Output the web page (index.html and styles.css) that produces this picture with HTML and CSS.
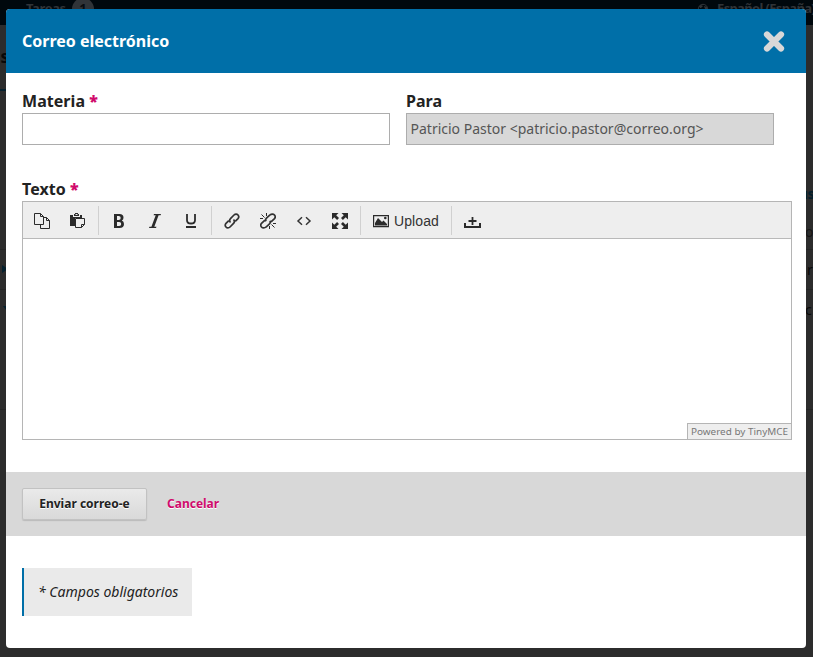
FILE: index.html
```html
<!DOCTYPE html>
<html lang="es">
<head>
<meta charset="utf-8">
<title>Correo electrónico</title>
<link rel="stylesheet" href="styles.css">
</head>
<body>
<div class="backdrop" aria-hidden="true">
  <div class="nav"></div>
  <span class="bg tasks">Tareas</span><span class="bg count">1</span>
  <svg class="bg globe" viewBox="0 0 12 12"><circle cx="6" cy="6" r="4.700" fill="none" stroke="#303438" stroke-width="1"/><path d="M2 3l2-1 2 1-2 2H3zM7 3l3 1v3L8 6z" fill="#303438"/></svg>
  <span class="bg lang">Español (España)</span>
  <span class="bg title">Us</span><span class="bg tabline"></span>
  <span class="bg row r1"></span><span class="bg row r2"></span><span class="bg row r3"></span>
  <span class="bg arrow"></span><span class="bg arrow down"></span>
  <span class="bg action">us</span><span class="bg word w1">o</span><span class="bg word w2">r</span><span class="bg word w3">c</span>
</div>
<main class="modal">
  <header class="head">
    <h1>Correo electrónico</h1>
    <button class="close" aria-label="Cerrar"><svg width="22" height="22" viewBox="0 0 22 22"><path d="M4 4.500L18 18.500M18 4.500L4 18.500" stroke="#d8d8d8" stroke-width="6.200" stroke-linecap="round"/></svg></button>
  </header>
  <form>
    <div class="fields">
      <div class="field"><label for="subject">Materia <b>*</b></label><input id="subject"></div>
      <div class="field"><label for="to">Para</label><input id="to" value="Patricio Pastor &lt;patricio.pastor@correo.org&gt;" disabled></div>
    </div>
    <div class="field message">
      <label>Texto <b>*</b></label>
      <div class="editor">
        <div class="toolbar">
          <div class="group">
            <i class="tool"><svg viewBox="0 0 16 16"><path class="thin" d="M.5.5h6l3 3v8h-9zM6.500.5v3h3M9.500 4.500h3l3 3v8h-9v-4M12.500 4.500v3h3"/></svg></i>
            <i class="tool"><svg viewBox="0 0 16 16"><path class="fill" d="M0 2h3v2h7V2h2v3H5v8H0zM4 1h1V0h3v1h1v2H4z"/><path class="paper" d="M5.500 1h2v1h-2z"/><path class="paper sheet" d="M5.500 5.500h9v6l-3 3h-6z"/><path class="thin" d="M11.500 14.500v-3h3"/></svg></i>
          </div>
          <div class="group">
            <i class="tool"><svg viewBox="0 0 16 16"><path fill-rule="evenodd" class="fill" d="M3 1h5.500q4 0 4 3.700 0 2-1.700 2.900Q13 8.500 13 11q0 4-4.500 4H3zM6 3v4h1.700q2 0 2-2t-2-2zM6 9v4h2.200q2 0 2-2t-2-2z"/></svg></i>
            <i class="tool"><svg viewBox="0 0 16 16"><path class="fill" d="M7 1h7l-.4 1.200h-2L7.300 13.800h2.200L9 15H2l.4-1.200h2L8.700 2.200H6.600z"/></svg></i>
            <i class="tool"><svg viewBox="0 0 16 16"><path d="M4 1v6.200Q4 10.500 8 10.500t4-3.300V1" fill="none" stroke="#2b2b2b" stroke-width="1.800"/><path class="fill" d="M3 13h10v2H3z"/></svg></i>
          </div>
          <div class="group">
            <i class="tool"><svg viewBox="0 0 16 16"><g class="chain"><path d="M6.500 9.500C5 8 5.300 6.800 6.700 5.400L10 2c1.200-1.200 3-1.200 4 0s1 2.500 0 3.600l-2.800 2.800"/><path d="M9.500 6.500c1.500 1.500 1.200 2.700-.2 4.100L6 14c-1.200 1.200-3 1.200-4 0s-1-2.500 0-3.600l2.800-2.800"/></g></svg></i>
            <i class="tool"><svg viewBox="0 0 16 16"><g class="chain"><path d="M6.300 8C5 6.800 6 5.700 7 4.700L10 2c1.200-1.200 3.500-1.200 4.500 0s1 2.500 0 3.600l-3 2.800-1.500.3"/><path d="M9.700 8c1.200 1.200.3 2.400-.7 3.300L6 14c-1.200 1.200-3.500 1.200-4.500 0s-1-2.500 0-3.600l3-2.800 1.500-.3"/></g><path class="thin" d="M1.500 1.500l3 3M6.500 0v3M0 5.500h3M14.500 14.500l-3-3M9.500 16v-3M16 10.500h-3"/></svg></i>
            <i class="tool"><svg viewBox="0 0 16 16"><path fill="none" stroke="#333" stroke-width="1.500" d="M6 4.300L2 8l4 3.700M10 4.300L14 8l-4 3.700"/></svg></i>
            <i class="tool"><svg viewBox="0 0 16 16"><path class="fill" d="M0 0h6.500L4.200 2.300 7 5.100 5.100 7 2.300 4.200 0 6.500zM16 0H9.500l2.300 2.300L9 5.100 10.900 7l2.800-2.800L16 6.500zM0 16h6.500l-2.300-2.300L7 10.900 5.100 9l-2.800 2.800L0 9.500zM16 16H9.500l2.300-2.300L9 10.900 10.900 9l2.800 2.800L16 9.500z"/></svg></i>
          </div>
          <div class="group">
            <span class="upload"><svg viewBox="0 0 16 16"><path d="M.6 2.600h14.800v11H.6z" fill="none" stroke="#2b2b2b" stroke-width="1.200"/><path class="fill" d="M2 12.500v-2.500l3-5 4 4 1.500-1.500L14 11v1.500z"/><circle class="fill" cx="12.300" cy="5" r="1.300"/></svg>Upload</span>
          </div>
          <div class="group">
            <i class="tool export"><svg viewBox="0 0 17 16"><path class="fill" d="M0 10h2v3h13v-3h2v5H0zM7.600 4h1.800v3.100h3.100v1.800H9.400V12H7.600V8.900H4.500V7.100h3.100z"/></svg></i>
          </div>
        </div>
        <div class="canvas"><svg class="brand" width="104" height="16"><text x="3" y="10.500" textLength="97" lengthAdjust="spacingAndGlyphs">Powered by TinyMCE</text></svg></div>
      </div>
    </div>
    <footer class="actions"><button type="button" class="send">Enviar correo-e</button><a class="cancel">Cancelar</a></footer>
    <p class="required">* Campos obligatorios</p>
  </form>
</main>
</body>
</html>
```
FILE: styles.css
```css
* { box-sizing: border-box; }
body { display: flex; margin: 0; height: 657px; overflow: hidden; background: #2c2c2c; font-family: "Noto Sans", sans-serif; color: #222; }
.backdrop { position: absolute; inset: 0; overflow: hidden; z-index: -1; }
.nav { height: 25px; background: #00080d; }
.bg { position: absolute; white-space: nowrap; }
.tasks, .lang { font-size: 13px; font-weight: 700; line-height: 18px; letter-spacing: -.35px; color: #303438; top: -1px; }
.tasks { left: 26px; }
.lang { left: 717px; letter-spacing: -.65px; }
.count { left: 72px; top: -2px; width: 22px; height: 22px; border-radius: 50%; background: #303438; color: #080c10; font-size: 13px; font-weight: 700; line-height: 20px; text-align: center; }
.globe { left: 697px; top: 3px; width: 12px; height: 12px; }
.title { right: 804px; top: 45px; font-size: 17px; font-weight: 700; line-height: 24px; color: #080808; }
.tabline { left: 0; top: 89px; width: 10px; height: 2px; background: #05202d; }
.row { left: 0; right: 0; height: 1px; background: #252525; }
.r1 { top: 249px; }
.r2 { top: 289px; }
.r3 { top: 409px; }
.arrow { left: 2px; top: 265px; border: 4px solid transparent; border-left: 6px solid #05202d; }
.down { left: 3px; top: 306px; border-left: 4px solid transparent; border-top: 5px solid #05202d; }
.action { right: -1px; top: 184px; font-size: 14px; font-weight: 700; line-height: 20px; letter-spacing: -.5px; color: #05202d; }
.word { left: 805px; font-size: 14px; line-height: 20px; color: #080808; }
.w1 { top: 222px; color: #161616; }
.w2 { top: 260px; left: 807px; }
.w3 { top: 300px; }
.modal { width: 800px; height: 639px; margin: 9px 0 0 6px; background: #fff; border-radius: 4px; overflow: hidden; }
.head { display: flex; align-items: center; justify-content: space-between; height: 64px; padding: 0 21px 0 16px; background: #006fa8; }
h1 { margin: 0; font-size: 16px; line-height: 24px; letter-spacing: 0; color: #fff; }
.close { display: flex; padding: 0; border: 0; background: none; }
.fields { display: flex; gap: 16px; padding: 16px 16px 0; }
.fields .field { width: 368px; }
label { display: block; height: 24px; font-size: 16px; line-height: 24px; font-weight: 700; letter-spacing: .05px; }
label b { color: #d00a6c; }
input { display: block; width: 100%; height: 32px; border: 1px solid #adadad; border-radius: 0; padding: 0 4px 2px 3.500px; background: #fff; font: 14px "Noto Sans", sans-serif; }
input:disabled { background: #d8d8d8; color: #555; }
.message { padding: 32px 14px 0 16px; }
.editor { height: 239px; border: 1px solid #b5b5b5; }
.toolbar { display: flex; height: 37px; padding: 4px 0 3px; background: #eee; border-bottom: 1px solid #b9b9b9; }
.group { display: flex; align-items: center; padding: 0 2px 0 1px; border-right: 1px solid #d0d0d0; }
.group + .group { padding-left: 2px; }
.group:last-child { border: 0; }
.tool { display: flex; justify-content: center; width: 36px; }
.tool svg, .upload svg { width: 16px; height: 16px; }
.export { width: 37px; padding-top: 1px; }
.tool.export svg { width: 17px; }
.fill { fill: #2b2b2b; }
.paper { fill: #eee; }
.thin { fill: none; stroke: #2b2b2b; stroke-width: 1; }
.sheet { stroke: #2b2b2b; stroke-width: 1; }
.chain { fill: none; stroke: #333; stroke-width: 1.7; }
.upload { display: flex; align-items: center; gap: 5px; width: 86px; padding-left: 10px; font: 14px/20px "Liberation Sans", sans-serif; letter-spacing: .1px; color: #333; }
.canvas { display: flex; height: 200px; align-items: flex-end; justify-content: flex-end; }
.brand { background: #eee; border-top: 1px solid #b5b5b5; border-left: 1px solid #b5b5b5; }
.brand text { font: 9.5px "Noto Sans", sans-serif; fill: #777; }
.actions { display: flex; align-items: center; gap: 20px; height: 64px; margin-top: 32px; padding: 0 16px; background: #d8d8d8; font-size: 12px; font-weight: 700; }
.send { width: 125px; height: 32px; padding: 0 0 2px; border: 1px solid #c2c2c2; border-radius: 2px; background: linear-gradient(#eaeaea, #d9d9d9); box-shadow: 0 1px 1px #bbb; font: 700 12px "Noto Sans", sans-serif; color: #222; text-shadow: 0 1px #fff; }
.cancel { padding-bottom: 2px; color: #d00a6c; text-shadow: 0 1px #fff; }
.required { width: 170px; height: 48px; margin: 32px 0 0 16px; padding-left: 14px; border-left: 2px solid #006fa8; background: #eaeaea; font-size: 14px; font-style: italic; line-height: 48px; }
```
